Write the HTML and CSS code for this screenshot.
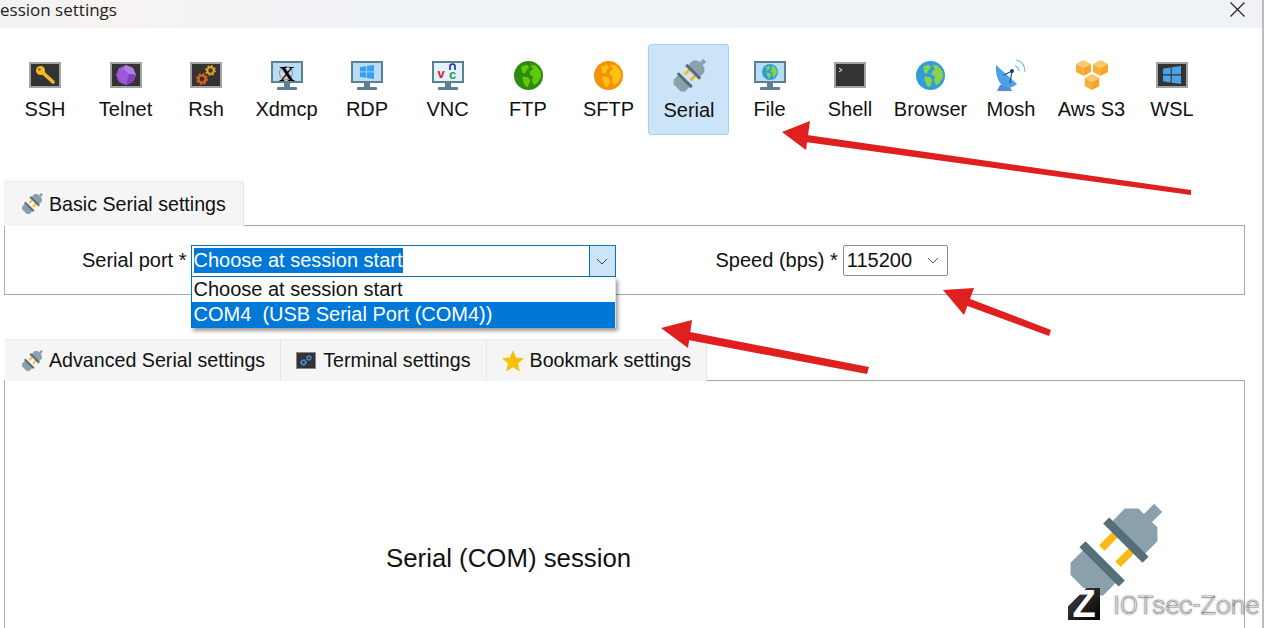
FILE: index.html

```html
<!DOCTYPE html>
<html lang="en">
<head>
    <meta charset="utf-8">
    <title>Session settings</title>
    <link rel="stylesheet" href="styles.css">
</head>
<body>

<svg class="sprite" xmlns="http://www.w3.org/2000/svg">
    <symbol id="plug" viewBox="0 0 100 100" overflow="visible">
        <g transform="rotate(-45 50 50)">
            <rect x="99" y="44" width="16" height="12" fill="#8aa0ad"/>
            <polygon points="70,26 90,26 100,36 100,64 90,74 70,74" fill="#8aa0ad"/>
            <polygon points="30,26 10,26 1,35 1,65 10,74 30,74" fill="#8aa0ad"/>
            <rect x="44" y="34" width="20" height="8" fill="#fdb913"/>
            <rect x="44" y="58" width="20" height="8" fill="#fdb913"/>
            <rect x="28" y="21" width="9" height="58" fill="#546e7a"/>
            <rect x="63" y="21" width="9" height="58" fill="#546e7a"/>
        </g>
    </symbol>
    <symbol id="screen" viewBox="0 0 32 29">
        <rect width="32" height="22" fill="#5d7f8f"/>
        <rect x="2" y="2" width="28" height="18" fill="#b7def9"/>
        <rect x="13" y="22" width="6" height="4" fill="#5d7f8f"/>
        <rect x="6" y="26" width="20" height="3" rx="1" fill="#5d7f8f"/>
    </symbol>
    <symbol id="globe" viewBox="0 0 32 32">
        <circle cx="16" cy="16" r="16" style="fill:var(--sea)"/>
        <g style="fill:var(--land)">
            <polygon points="8,6 14,4 17,7 14,10 12,14 9,13"/>
            <polygon points="18,4 24,5 29,11 30,17 26,24 22,27 20,21 21,17 17,15 18,11 21,9"/>
            <polygon points="9,17 16,18 18,22 15,29 12,27 10,22"/>
        </g>
    </symbol>
    <symbol id="winlogo" viewBox="0 0 20 20">
        <polygon points="0,3 8.5,1.7 8.5,9.3 0,9.3"/>
        <polygon points="9.7,1.5 20,0 20,9.3 9.7,9.3"/>
        <polygon points="0,10.5 8.5,10.5 8.5,18.3 0,17"/>
        <polygon points="9.7,10.5 20,10.5 20,20 9.7,18.5"/>
    </symbol>
    <symbol id="cube" viewBox="0 0 15 16">
        <polygon points="7.5,0 15,4 7.5,8 0,4" fill="#fbc872"/>
        <polygon points="0,4 7.5,8 7.5,16 0,12" fill="#f7ae3a"/>
        <polygon points="15,4 7.5,8 7.5,16 15,12" fill="#f5a623"/>
    </symbol>
    <symbol id="gear" viewBox="0 0 12 12">
        <circle cx="6" cy="6" r="3.6" fill="none" stroke="currentColor" stroke-width="2.4"/>
        <circle cx="6" cy="6" r="5.2" fill="none" stroke="currentColor" stroke-width="1.6" stroke-dasharray="2 2.08"/>
    </symbol>
</svg>

<div class="title-bar">
    <span class="title-text">ession settings</span>
    <svg class="close-icon" viewBox="0 0 15 15"><path d="M0.5 0.5 L14.5 14.5 M14.5 0.5 L0.5 14.5" stroke="#222" stroke-width="1.2" fill="none"/></svg>
</div>

<div class="toolbar">
    <div class="tool">
        <svg class="icon-box" viewBox="0 0 32 26">
            <rect x="1" y="1" width="30" height="24" fill="#333" stroke="#a3a3a3" stroke-width="2"/>
            <circle cx="11.500" cy="8.500" r="4.500" fill="#f6b924"/>
            <path d="M12 9 L24 20" stroke="#f6b924" stroke-width="3.600" stroke-linecap="round"/>
            <circle cx="10.500" cy="7.500" r="1.200" fill="#6b5a20"/>
        </svg>
        <span class="tool-label">SSH</span>
    </div>
    <div class="tool">
        <svg class="icon-box" viewBox="0 0 32 26">
            <rect x="1" y="1" width="30" height="24" fill="#333" stroke="#a3a3a3" stroke-width="2"/>
            <polygon points="16,3 23,6 26,13 23,20 16,23 9,20 6,13 9,6" fill="#9b59d9"/>
            <polygon points="16,3 23,6 26,13 19,12 13,7" fill="#b57de6"/>
            <polygon points="19,12 26,13 23,20 16,23" fill="#7f3fc0"/>
        </svg>
        <span class="tool-label">Telnet</span>
    </div>
    <div class="tool">
        <svg class="icon-box" viewBox="0 0 32 26">
            <rect x="1" y="1" width="30" height="24" fill="#333" stroke="#a3a3a3" stroke-width="2"/>
            <use href="#gear" x="15" y="3" width="11" height="11" class="gear-yellow"/>
            <use href="#gear" x="6" y="11" width="12" height="12" class="gear-orange"/>
        </svg>
        <span class="tool-label">Rsh</span>
    </div>
    <div class="tool">
        <svg class="icon-screen" viewBox="0 0 32 29">
            <use href="#screen" width="32" height="29"/>
            <circle cx="15" cy="12" r="6.500" fill="none" stroke="#c9764a" stroke-width="1"/>
            <text x="16" y="20" class="x-mark">X</text>
        </svg>
        <span class="tool-label">Xdmcp</span>
    </div>
    <div class="tool">
        <svg class="icon-screen" viewBox="0 0 32 29">
            <use href="#screen" width="32" height="29"/>
            <use href="#winlogo" x="9" y="4" width="14" height="14" fill="#3a9df0"/>
        </svg>
        <span class="tool-label">RDP</span>
    </div>
    <div class="tool">
        <svg class="icon-screen" viewBox="0 0 32 29">
            <use href="#screen" width="32" height="29"/>
            <rect x="2" y="2" width="28" height="18" fill="#e3f1fb"/>
            <text x="9" y="17" class="vnc-letter vnc-v">v</text>
            <path d="M18 9 V5.500 A2.500 2.500 0 0 1 23 5.500 V9" fill="none" stroke="#1f2fc0" stroke-width="1.600"/>
            <text x="20.500" y="18" class="vnc-letter vnc-c">c</text>
        </svg>
        <span class="tool-label">VNC</span>
    </div>
    <div class="tool">
        <svg class="icon-globe globe-ftp"><use href="#globe" width="29" height="29"/></svg>
        <span class="tool-label">FTP</span>
    </div>
    <div class="tool">
        <svg class="icon-globe globe-sftp"><use href="#globe" width="29" height="29"/></svg>
        <span class="tool-label">SFTP</span>
    </div>
    <div class="tool tool-active">
        <svg class="icon-plug"><use href="#plug" width="34" height="34"/></svg>
        <span class="tool-label">Serial</span>
    </div>
    <div class="tool">
        <svg class="icon-screen globe-browser" viewBox="0 0 32 29">
            <use href="#screen" width="32" height="29"/>
            <use href="#globe" x="8" y="3" width="16" height="16"/>
        </svg>
        <span class="tool-label">File</span>
    </div>
    <div class="tool">
        <svg class="icon-box" viewBox="0 0 32 26">
            <rect x="1" y="1" width="30" height="24" fill="#333" stroke="#a3a3a3" stroke-width="2"/>
            <path d="M5 6 L8 8 L5 10" fill="none" stroke="#eee" stroke-width="1"/>
        </svg>
        <span class="tool-label">Shell</span>
    </div>
    <div class="tool">
        <svg class="icon-globe globe-browser"><use href="#globe" width="29" height="29"/></svg>
        <span class="tool-label">Browser</span>
    </div>
    <div class="tool">
        <svg class="icon-dish" viewBox="0 0 32 32">
            <polygon points="5,26 14,26 17,32 2,32" fill="#4a90d9"/>
            <path d="M1 6 L22 25 Q12 33 5 24 Q0 16 1 6 Z" fill="#4f9fe6"/>
            <path d="M9 16 L17 12 L15 24" fill="none" stroke="#1d4f8c" stroke-width="1.200"/>
            <circle cx="17" cy="12" r="2" fill="#123f7a"/>
            <path d="M20 7 Q24 8 24 12 M21 1 Q30 3 30 13" fill="none" stroke="#74b9e8" stroke-width="1.200"/>
        </svg>
        <span class="tool-label">Mosh</span>
    </div>
    <div class="tool">
        <svg class="icon-cubes" viewBox="0 0 32 30">
            <use href="#cube" x="0" y="0" width="15" height="16"/>
            <use href="#cube" x="17" y="0" width="15" height="16"/>
            <use href="#cube" x="8.500" y="14" width="15" height="16"/>
        </svg>
        <span class="tool-label">Aws S3</span>
    </div>
    <div class="tool">
        <svg class="icon-box" viewBox="0 0 32 26">
            <rect x="1" y="1" width="30" height="24" fill="#333" stroke="#a3a3a3" stroke-width="2"/>
            <use href="#winlogo" x="7" y="3" width="18" height="20" fill="#4aa3e8"/>
        </svg>
        <span class="tool-label">WSL</span>
    </div>
</div>

<div class="tab-strip tab-strip-basic">
    <div class="tab">
        <svg class="tab-icon"><use href="#plug" width="22" height="22"/></svg>
        Basic Serial settings
    </div>
</div>
<div class="panel panel-basic">
    <span class="field-label">Serial port *</span>
    <div class="combo">
        <div class="combo-value"><span class="combo-selected">Choose at session start</span></div>
        <div class="combo-button">
            <svg class="chevron" viewBox="0 0 12 7"><path d="M1 1 L6 6 L11 1" fill="none" stroke="#444" stroke-width="1"/></svg>
        </div>
        <ul class="combo-list">
            <li>Choose at session start</li>
            <li class="combo-item-active">COM4  (USB Serial Port (COM4))</li>
        </ul>
    </div>
    <span class="field-label speed-label">Speed (bps) *</span>
    <div class="speed-select">
        115200
        <svg class="chevron" viewBox="0 0 12 7"><path d="M1 1 L6 6 L11 1" fill="none" stroke="#555" stroke-width="1"/></svg>
    </div>
</div>

<div class="tab-strip tab-strip-lower">
    <div class="tab tab-first">
        <svg class="tab-icon"><use href="#plug" width="22" height="22"/></svg>
        Advanced Serial settings
    </div>
    <div class="tab">
        <svg class="tab-icon-small" viewBox="0 0 20 17">
            <rect x="0.500" y="0.500" width="19" height="16" fill="#333" stroke="#888"/>
            <use href="#gear" x="10" y="3" width="6" height="6" class="gear-blue"/>
            <use href="#gear" x="4" y="7" width="7" height="7" class="gear-blue"/>
        </svg>
        Terminal settings
    </div>
    <div class="tab">
        <svg class="tab-icon" viewBox="0 0 22 22"><polygon points="11,0 14.200,7.400 22,8.200 16,13.400 17.800,21.500 11,17.200 4.200,21.500 6,13.400 0,8.200 7.800,7.400" fill="#f4c20d"/></svg>
        Bookmark settings
    </div>
</div>
<div class="panel panel-info">
    <span class="session-title">Serial (COM) session</span>
    <svg class="big-plug"><use href="#plug" width="96" height="96"/></svg>
</div>

<svg class="arrows" viewBox="0 0 1266 628">
    <path d="M1191 190 L800 134 L798 141 L1191 195 Z" fill="#e01f1f"/>
    <polygon points="782,132 810,121 806,150" fill="#e01f1f"/>
    <path d="M1051 330 L965 297 L962 304 L1049 336 Z" fill="#e01f1f"/>
    <polygon points="943,290 974,288 964,315" fill="#e01f1f"/>
    <path d="M869 367 L685 331 L683 339 L867 374 Z" fill="#e01f1f"/>
    <polygon points="661,328 692,320 688,348" fill="#e01f1f"/>
</svg>

<div class="watermark">
    <span class="watermark-logo">Z</span>
    <span class="watermark-text">IOTsec-Zone</span>
</div>

</body>
</html>
```

FILE: styles.css

```css
html, body {
    height: 628px;
    overflow: hidden;
}

body {
    margin: 0;
    position: relative;
    background-color: #fff;
    color: #111;
    font-family: 'Liberation Sans', Arial, sans-serif;
    font-size: 20px;
}

/* edge of the dialog window */
body::after {
    content: "";
    position: absolute;
    top: 0;
    left: 1262px;
    width: 2px;
    height: 628px;
    background-color: #bcbcbc;
}

.sprite {
    position: absolute;
    width: 0;
    height: 0;
}

.title-bar {
    display: flex;
    justify-content: space-between;
    width: 1262px;
    height: 28px;
    background: linear-gradient(90deg, #f2f2f2, #f6f3f1 100px, #eff3f8 400px);
}

.title-text {
    font-family: 'Open Sans', sans-serif;
    font-size: 17px;
    line-height: 20px;
    color: #222;
}

.close-icon {
    width: 15px;
    height: 15px;
    margin: 2px 17px 0 0;
}

.toolbar {
    display: grid;
    grid-template-columns: repeat(15, 80.5px);
    margin-top: 16px;
    padding-left: 4.75px;
}

.tool {
    display: grid;
    grid-template-rows: 32px 23px;
    row-gap: 7px;
    align-content: start;
    align-items: center;
    justify-items: center;
    height: 91px;
    box-sizing: border-box;
    padding-top: 15px;
}

.tool-active {
    margin-left: -1px;
    padding-left: 1px;
    background-color: #cce4f7;
    border: 1px solid #a9d0ee;
    border-radius: 3px;
}

.tool-label {
    line-height: 23px;
    white-space: nowrap;
}

.icon-box {
    width: 32px;
    height: 26px;
}

.icon-screen {
    width: 32px;
    height: 29px;
}

.icon-globe {
    width: 29px;
    height: 29px;
}

.icon-plug {
    width: 34px;
    height: 34px;
}

.icon-dish {
    width: 32px;
    height: 32px;
}

.icon-cubes {
    width: 32px;
    height: 30px;
}

.globe-ftp {
    --sea: #2f8a10;
    --land: #5fca08;
}

.globe-sftp {
    --sea: #f39206;
    --land: #ffc20e;
}

.globe-browser {
    --sea: #2f9ed8;
    --land: #8bd14a;
}

.gear-yellow {
    color: #e0a020;
}

.gear-orange {
    color: #d9601a;
}

.gear-blue {
    color: #4a8fe0;
}

.x-mark {
    font-family: 'Liberation Serif', serif;
    font-size: 22px;
    font-weight: bold;
    text-anchor: middle;
    fill: #000;
}

.vnc-letter {
    font-family: 'Liberation Sans', sans-serif;
    font-size: 13px;
    font-weight: bold;
    text-anchor: middle;
}

.vnc-v {
    fill: #d0202a;
}

.vnc-c {
    fill: #1c9a3c;
}

.tab-strip {
    display: flex;
    position: relative;
    z-index: 1;
    font-size: 19.65px;
}

.tab-strip-basic {
    margin: 46px 0 0 4px;
}

.tab-strip-lower {
    margin: 44px 0 0 5px;
}

.tab {
    display: flex;
    align-items: center;
    gap: 6px;
    height: 42px;
    box-sizing: border-box;
    padding: 0 15px;
    background-color: #f5f5f5;
    border-top: 1px solid #eee;
    border-right: 1px solid #e6e6e6;
    white-space: nowrap;
}

.tab-strip-basic .tab {
    height: 45px;
    padding: 0 17px;
}

.tab-first {
    padding-left: 16px;
}

.tab-icon {
    width: 22px;
    height: 22px;
    flex: none;
}

.tab-icon-small {
    width: 20px;
    height: 17px;
    flex: none;
    margin-right: 1px;
}

.panel {
    display: flex;
    width: 1241px;
    margin-left: 4px;
    box-sizing: border-box;
    border: 1px solid #a8a8a8;
}

.panel-basic {
    height: 70px;
    margin-top: -1px;
    padding: 19px 0 0 77px;
    align-items: flex-start;
}

.field-label {
    line-height: 30px;
    white-space: nowrap;
}

.combo {
    position: relative;
    display: flex;
    width: 425px;
    height: 32px;
    margin-left: 4px;
    box-sizing: border-box;
    border: 1px solid #0a72b8;
}

.combo-value {
    flex: 1;
    padding: 2px 0 0 2px;
}

.combo-selected {
    display: inline-block;
    height: 25px;
    line-height: 25px;
    background-color: #0078d7;
    color: #fff;
}

.combo-button {
    display: flex;
    align-items: center;
    justify-content: center;
    width: 25px;
    background-color: #cce4f7;
    border-left: 1px solid #0a72b8;
}

.chevron {
    width: 12px;
    height: 7px;
}

.combo-list {
    position: absolute;
    top: 31px;
    left: -1px;
    z-index: 2;
    width: 425px;
    margin: 0;
    padding: 0;
    box-sizing: border-box;
    list-style: none;
    background-color: #fff;
    border-left: 1px solid #0a72b8;
    border-right: 1px solid #dbe4ea;
    box-shadow: 2px 3px 4px rgba(0, 0, 0, 0.4);
}

.combo-list li {
    height: 25px;
    line-height: 25px;
    padding-left: 2px;
    white-space: pre;
}

.combo-list .combo-item-active {
    height: 26px;
    background-color: #0078d7;
    color: #fff;
}

.speed-label {
    margin-left: 100px;
}

.speed-select {
    display: flex;
    align-items: center;
    justify-content: space-between;
    width: 105px;
    height: 31px;
    margin-left: 5px;
    padding: 0 8px 0 3px;
    box-sizing: border-box;
    background-color: #fff;
    border: 1px solid #8a8a8a;
    border-radius: 2px;
}

.panel-info {
    height: 248px;
    margin-top: -1px;
    padding: 123px 82px 0 381px;
    border-bottom: none;
    align-items: flex-start;
    justify-content: space-between;
}

.session-title {
    margin-top: 39px;
    font-size: 25.8px;
    line-height: 30px;
}

.big-plug {
    width: 96px;
    height: 96px;
}

.arrows {
    position: absolute;
    top: 0;
    left: 0;
    width: 1266px;
    height: 628px;
    z-index: 3;
    pointer-events: none;
}

.watermark {
    position: absolute;
    top: 588px;
    left: 1068px;
    z-index: 4;
    display: flex;
    align-items: center;
    gap: 13px;
}

.watermark-logo {
    width: 32px;
    height: 32px;
    background: linear-gradient(135deg, #fff 28%, #333 29%, #000);
    color: #fff;
    font-size: 38px;
    font-weight: bold;
    line-height: 33px;
    text-align: center;
}

.watermark-text {
    font-family: Roboto, sans-serif;
    font-size: 26.5px;
    font-weight: 300;
    color: #fff;
    -webkit-text-stroke: 0.7px #8f8f8f;
    text-shadow: 0 0 3px #999;
    white-space: nowrap;
}
```
